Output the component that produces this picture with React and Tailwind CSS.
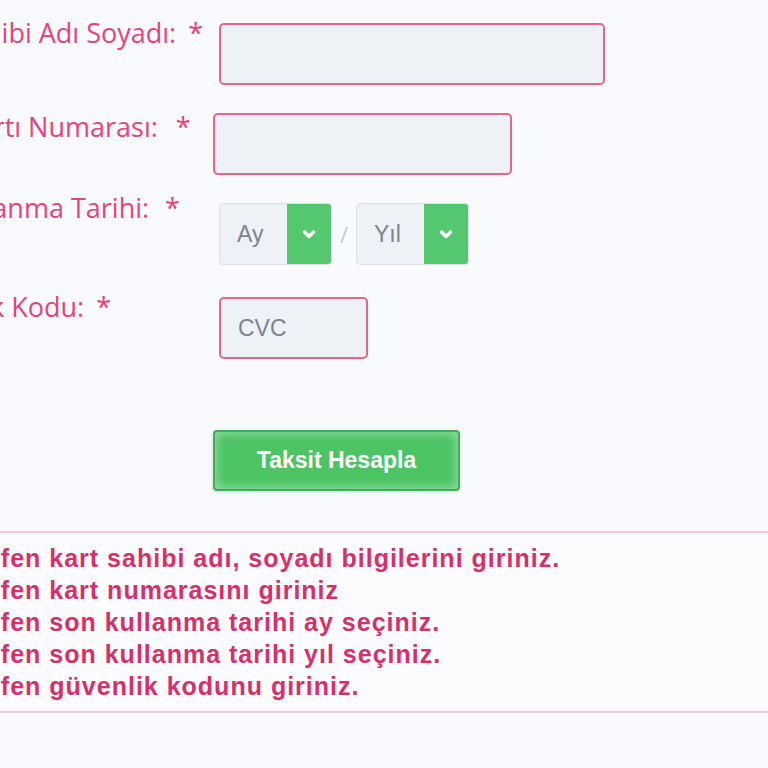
import React from 'react';

const labelFont = { fontFamily: '"Open Sans", "Liberation Sans", sans-serif' };
const arial = { fontFamily: '"Liberation Sans", Arial, sans-serif' };

const Chevron = () => (
  <svg width="16" height="11" viewBox="0 0 16 11" fill="none">
    <path d="M3.5 3 L8 7.5 L12.5 3" stroke="white" strokeWidth="3.5" strokeLinecap="round" strokeLinejoin="round" />
  </svg>
);

const SelectBox = ({ placeholder }) => (
  <div className="flex h-[62px] w-[113px] rounded-[4px] overflow-hidden border border-[#dde1e7] bg-[#eef1f5]">
    <div className="flex-1 flex items-center pl-[17px] text-[23px] text-[#7b8491]" style={arial}>{placeholder}</div>
    <div className="w-[44px] bg-[#55c76e] flex items-center justify-center">
      <Chevron />
    </div>
  </div>
);

const Label = ({ children, className, star = 'ml-[12px]' }) => (
  <label className={`shrink-0 text-[27px] leading-[19px] whitespace-nowrap ${className}`}>
    {children}
    <span className={star}>*</span>
  </label>
);

const errors = [
  'Lütfen kart sahibi adı, soyadı bilgilerini giriniz.',
  'Lütfen kart numarasını giriniz',
  'Lütfen son kullanma tarihi ay seçiniz.',
  'Lütfen son kullanma tarihi yıl seçiniz.',
  'Lütfen güvenlik kodunu giriniz.',
];

export default function App() {
  return (
    <div className="min-h-screen w-full overflow-hidden bg-[#f9fafd]">
      {/* FORM */}
      <div className="pt-[23px] text-[#e5437a]" style={labelFont}>
        <div className="flex h-[62px]">
          <Label className="ml-[-104px] w-[323px]">Kart Sahibi Adı Soyadı:</Label>
          <input className="w-[386px] h-[62px] shrink-0 rounded-[5px] border-2 border-[#ea6487] bg-[#eef1f6] outline-none" />
        </div>
        <div className="flex h-[62px] mt-[28px]">
          <Label className="ml-[-111px] w-[324px] pt-[4px]" star="ml-[18px]">Kredi Kartı Numarası:</Label>
          <input className="w-[299px] h-[62px] shrink-0 rounded-[5px] border-2 border-[#ea6487] bg-[#eef1f6] outline-none" />
        </div>
        <div className="flex h-[62px] mt-[28px]">
          <Label className="ml-[-109px] w-[328px] -mt-[5px]" star="ml-[16px]">Son Kullanma Tarihi:</Label>
          <div className="flex items-center">
            <SelectBox placeholder="Ay" />
            <span className="w-[24px] text-center text-[22px] text-[#c4c9d1]">/</span>
            <SelectBox placeholder="Yıl" />
          </div>
        </div>
        <div className="flex h-[62px] mt-[32px]">
          <Label className="ml-[-105px] w-[324px]">Güvenlik Kodu:</Label>
          <input
            placeholder="CVC"
            style={arial}
            className="w-[149px] h-[62px] shrink-0 rounded-[5px] border-2 border-[#ea6487] bg-[#eef1f6] pl-[17px] text-[23px] placeholder:text-[#7b8491] outline-none"
          />
        </div>
        <div className="mt-[71px] ml-[213px]">
          <button
            className="w-[247px] h-[61px] rounded-[4px] border-2 border-[#3fae57] bg-[#4cc464] text-white text-[23px] font-bold shadow-[inset_0_0_12px_rgba(255,255,255,0.5),0_1px_4px_rgba(0,0,0,0.15)]"
            style={arial}
          >
            Taksit Hesapla
          </button>
        </div>
      </div>

      {/* ERROR SUMMARY */}
      <div className="mt-[40px] border-y-2 border-[#f3c8d5] bg-[#fcfcfe] py-[9px]">
        <ul
          className="ml-[-41px] text-[25px] leading-[32px] font-bold tracking-[1px] text-[#d6306a] whitespace-nowrap"
          style={arial}
        >
          {errors.map((e) => (
            <li key={e}>{e}</li>
          ))}
        </ul>
      </div>
    </div>
  );
}
